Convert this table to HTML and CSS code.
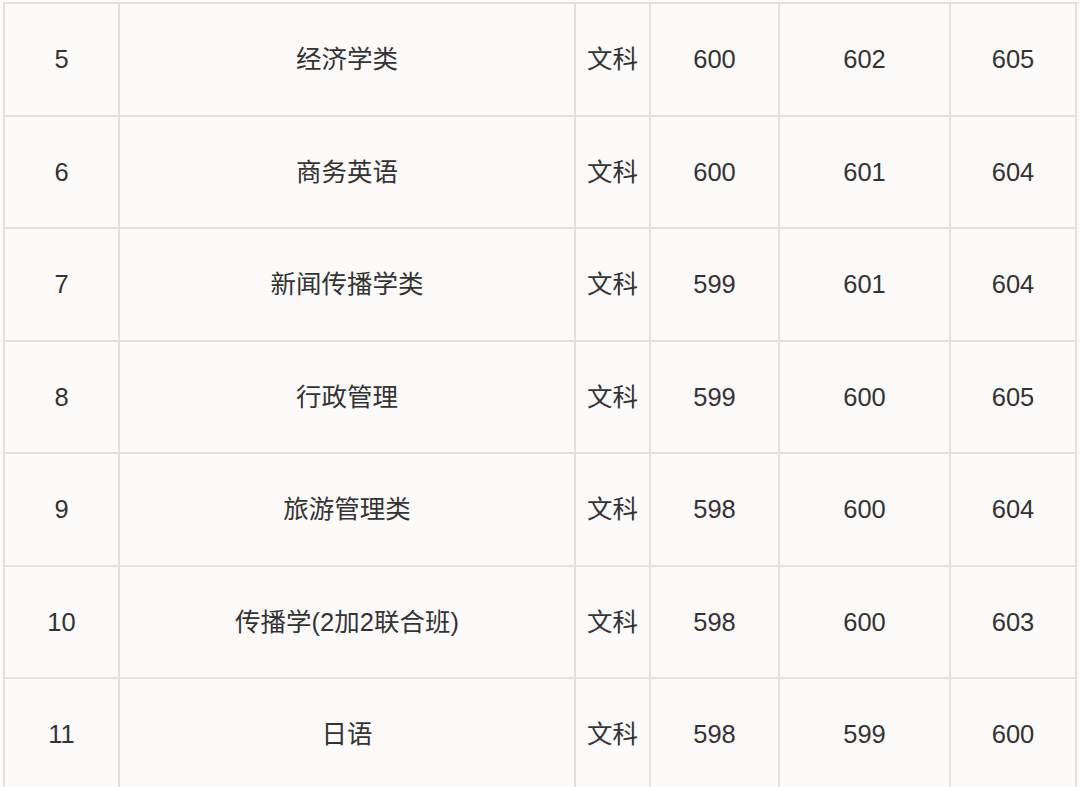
FILE: index.html
```html
<!DOCTYPE html>
<html lang="zh">
<head>
<meta charset="utf-8">
<link rel="stylesheet" href="styles.css">
</head>
<body>
<div class="table">
  <div class="row"><div class="c">5</div><div class="c">经济学类</div><div class="c">文科</div><div class="c">600</div><div class="c">602</div><div class="c">605</div></div>
  <div class="row"><div class="c">6</div><div class="c">商务英语</div><div class="c">文科</div><div class="c">600</div><div class="c">601</div><div class="c">604</div></div>
  <div class="row"><div class="c">7</div><div class="c">新闻传播学类</div><div class="c">文科</div><div class="c">599</div><div class="c">601</div><div class="c">604</div></div>
  <div class="row"><div class="c">8</div><div class="c">行政管理</div><div class="c">文科</div><div class="c">599</div><div class="c">600</div><div class="c">605</div></div>
  <div class="row"><div class="c">9</div><div class="c">旅游管理类</div><div class="c">文科</div><div class="c">598</div><div class="c">600</div><div class="c">604</div></div>
  <div class="row"><div class="c">10</div><div class="c">传播学(2加2联合班)</div><div class="c">文科</div><div class="c">598</div><div class="c">600</div><div class="c">603</div></div>
  <div class="row"><div class="c">11</div><div class="c">日语</div><div class="c">文科</div><div class="c">598</div><div class="c">599</div><div class="c">600</div></div>
</div>
</body>
</html>
```
FILE: styles.css
```css
html, body {
  margin: 0;
  padding: 0;
  background: #fcfbfa;
  height: 787px;
  overflow: hidden;
}
.table {
  margin: 2px 0 0 3px;
  width: 1074px;
  border-top: 2px solid #e2e1df;
  border-left: 2px solid #e2e1df;
  font-family: "Liberation Sans", "Noto Sans CJK SC", sans-serif;
  font-size: 25.5px;
  line-height: 30px;
  color: #333333;
}
.row {
  display: grid;
  grid-template-columns: 115px 456px 75px 129px 171px 126px;
  height: 112.5px;
}
.c {
  box-sizing: border-box;
  border-right: 2px solid #e2e1df;
  border-bottom: 2px solid #e2e1df;
  display: flex;
  align-items: center;
  justify-content: center;
  white-space: nowrap;
}
```
